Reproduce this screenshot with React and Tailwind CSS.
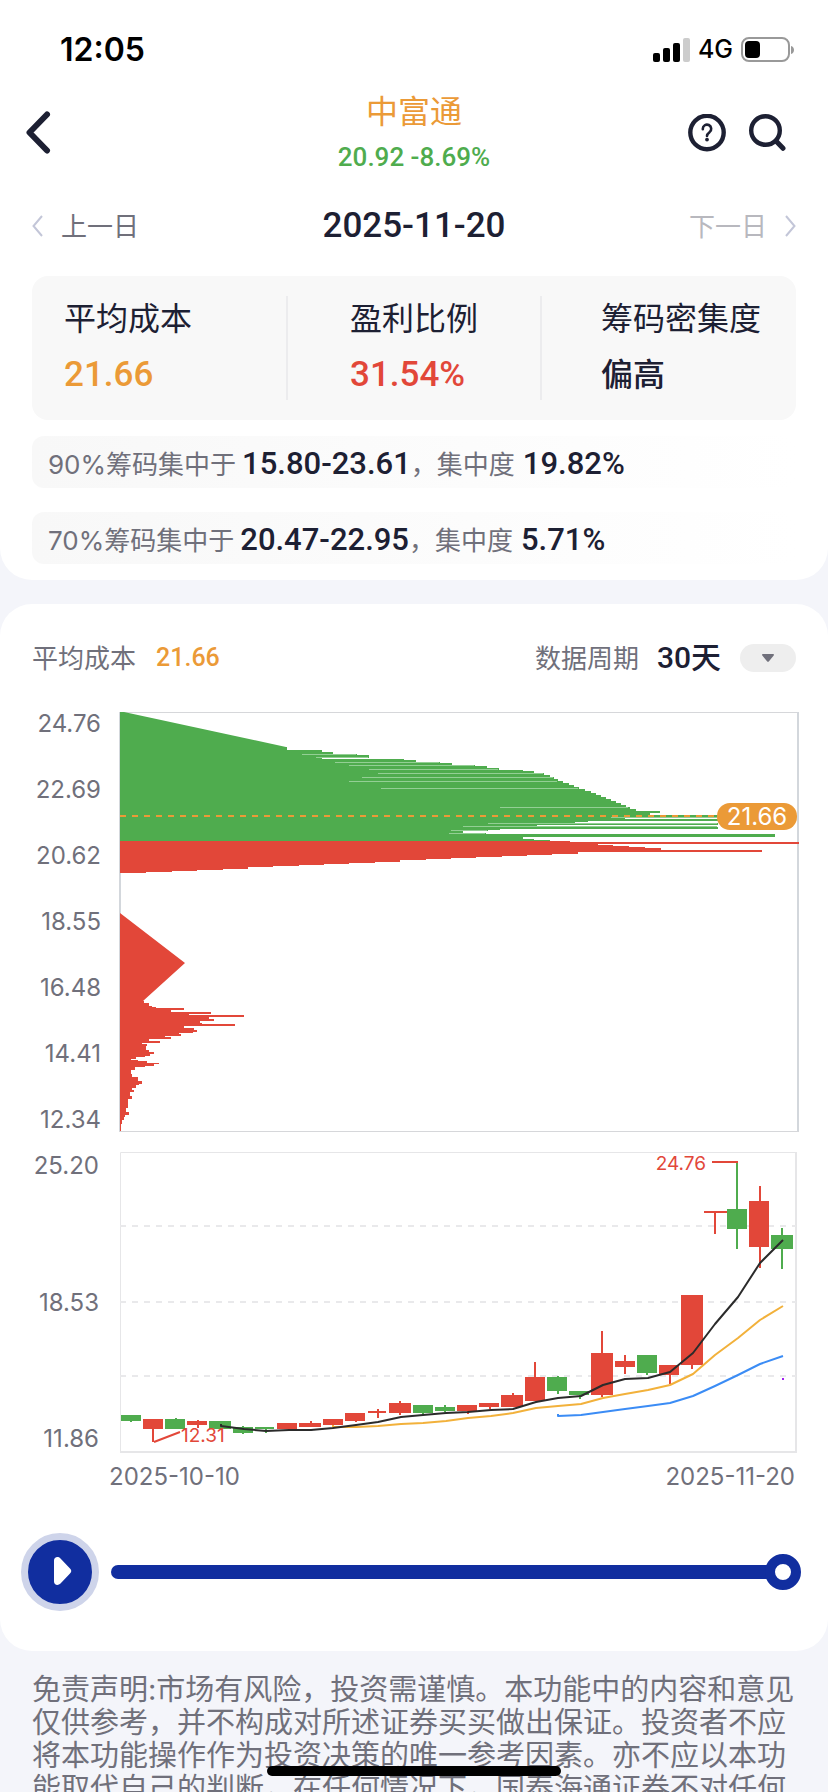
import React, { useState } from "react";

const GREEN = "#4fac4e";
const RED = "#e24739";

const COST_LABELS = ["24.76", "22.69", "20.62", "18.55", "16.48", "14.41", "12.34"];
const PRICE_LABELS = ["25.20", "18.53", "11.86"];

// Chip distribution as horizontal steps: [y, width], each step lasts until the next y.
const LOSS_STEPS = [
  [35, 167], [38, 202], [40, 213], [42, 237], [43, 249], [46, 202], [47, 284], [48, 296],
  [50, 320], [51, 332], [53, 355], [54, 367], [56, 379], [58, 403], [59, 414], [61, 424],
  [63, 430], [65, 434], [67, 438], [69, 443], [71, 449], [73, 454], [75, 459], [77, 465],
  [79, 471], [81, 476], [83, 481], [85, 486], [87, 491], [89, 496], [91, 501], [93, 506],
  [95, 510], [97, 516], [99, 540], [101, 530], [103, 598], [105, 505], [107, 598], [109, 468],
  [110, 455], [111, 598], [113, 417], [115, 598], [117, 380], [118, 368], [119, 343], [121, 366],
  [122, 655], [125, 403], [127, 414], [128, 430], [129, 0],
];
const GAIN_STEPS = [
  [129, 450], [130, 679], [132, 478], [133, 493], [134, 509], [135, 525], [136, 541], [138, 642],
  [140, 458], [142, 432], [143, 407], [144, 382], [145, 356], [146, 331], [147, 306], [148, 280],
  [150, 255], [151, 229], [152, 204], [153, 179], [154, 153], [155, 128], [157, 103], [158, 77],
  [159, 52], [160, 26], [161, 0],
];
const LOW_STEPS = [
  [289, 24], [291, 29], [294, 32], [295, 36], [296, 64], [298, 51], [300, 91], [302, 69],
  [303, 124], [305, 89], [307, 94], [309, 80], [311, 82], [312, 115], [314, 64], [316, 74],
  [318, 77], [320, 73], [321, 59], [322, 61], [324, 45], [325, 51], [327, 29], [329, 40],
  [331, 22], [332, 27], [334, 26], [338, 29], [340, 34], [342, 30], [344, 25], [345, 16],
  [347, 11], [348, 18], [349, 27], [351, 39], [352, 34], [354, 25], [355, 15], [358, 11],
  [362, 12], [365, 18], [369, 22], [372, 19], [373, 16], [376, 12], [378, 14], [380, 10],
  [384, 12], [387, 8], [396, 6], [400, 9], [403, 5], [405, 4], [408, 2], [412, 1], [419, 0],
];
// Hairline gaps between rows: [y, from, to]
const HAIRLINES = [
  [42, 183, 237], [45, 197, 249], [50, 216, 320], [53, 230, 355], [57, 250, 379], [61, 259, 424],
  [65, 243, 434], [69, 230, 438], [76, 262, 459], [95, 381, 509], [105, 492, 598], [111, 369, 598],
  [114, 344, 598], [118, 332, 368], [121, 330, 366],
];

// [x, width, open/close top, bottom, high, low, rising]
const CANDLES = [
  [1, 20, 263, 269, 263, 270, 0], [23, 20, 267, 277, 267, 290, 1], [45, 20, 267, 277, 266, 277, 0],
  [67, 20, 269, 273, 268, 276, 1], [89, 22, 269, 277, 269, 277, 0], [113, 20, 275, 281, 274, 282, 0],
  [135, 19, 275, 277, 275, 281, 0], [157, 20, 271, 277, 271, 277, 1], [179, 22, 271, 275, 269, 275, 1],
  [203, 20, 267, 273, 267, 275, 1], [225, 20, 261, 269, 261, 270, 1], [248, 18, 259, 261, 257, 266, 1],
  [269, 22, 251, 261, 249, 263, 1], [293, 20, 253, 261, 253, 262, 0], [315, 20, 255, 259, 253, 260, 0],
  [337, 20, 253, 259, 253, 262, 1], [359, 20, 251, 255, 251, 257, 1], [381, 22, 243, 255, 241, 255, 1],
  [405, 20, 225, 249, 210, 249, 1], [427, 20, 225, 239, 224, 242, 0], [449, 20, 239, 243, 239, 247, 0],
  [471, 22, 201, 243, 179, 245, 1], [495, 20, 209, 215, 203, 222, 1], [517, 20, 203, 221, 203, 223, 0],
  [539, 20, 213, 223, 213, 232, 1], [561, 22, 143, 213, 143, 217, 1], [584, 23, 59, 61, 59, 82, 1],
  [607, 20, 57, 77, 10, 97, 0], [629, 20, 49, 95, 34, 116, 1], [651, 22, 83, 97, 76, 117, 0],
];

const MA5 =
  "101,272 101,274 124,277 146,279 169,278 191,278 213,276 236,273 258,270 281,265 303,263 326,261 348,260 371,258 393,257 416,250 438,246 461,244 483,233 505,227 528,226 550,220 573,201 595,172 618,145 640,111 663,88";
const MA10 =
  "213,273 213,275 236,275 258,274 281,272 303,271 326,269 348,266 371,264 393,261 416,256 438,254 461,252 483,246 505,242 528,238 550,233 573,222 595,203 618,186 640,168 663,154";
const MA20 =
  "438,262 438,264 461,263 483,260 505,257 528,254 550,251 573,244 595,234 618,223 640,212 663,204";

function stepPath(steps) {
  let d = `M1 ${steps[0][0]}`;
  steps.forEach(([y, w]) => {
    d += `V${y}H${1 + w}`;
  });
  return `${d}H1Z`;
}

function StatusBar() {
  return (
    <div className="flex h-[90px] items-center justify-between pt-[10px] pl-[60px] pr-[33px] text-black">
      <div className="text-[32px] font-semibold">12:05</div>
      <div className="flex items-center gap-2">
        <svg width="37" height="24" viewBox="0 0 37 24">
          <rect x="0" y="15" width="7" height="9" rx="2" />
          <rect x="10" y="10" width="7" height="14" rx="2" />
          <rect x="20" y="5" width="7" height="19" rx="2" />
          <rect x="30" y="0" width="7" height="24" rx="2" fill="#cccccc" />
        </svg>
        <span className="text-[25px] font-medium">4G</span>
        <svg width="54" height="26" viewBox="0 0 54 26">
          <rect x="1" y="1" width="47" height="23" rx="7" fill="none" stroke="#999999" strokeWidth="2" />
          <rect x="4" y="4" width="15" height="17" rx="4" />
          <path d="M50 9c4 1 4 7 0 8z" fill="#999999" />
        </svg>
      </div>
    </div>
  );
}

function NavBar() {
  return (
    <header className="grid grid-cols-[1fr_auto_1fr] items-center pl-[25px] pr-[42px] text-[#1d2033]">
      <button aria-label="返回" className="justify-self-start">
        <svg width="26" height="44" viewBox="0 0 26 44" fill="none" stroke="currentColor" strokeWidth="6" strokeLinecap="round" strokeLinejoin="round">
          <path d="M22 3.500 4.500 21.500l17.500 18" />
        </svg>
      </button>
      <div className="pl-[17px] text-center">
        <h1 className="text-[32px] leading-[44px] text-[#eb9a37]">中富通</h1>
        <div className="mt-1 font-[Roboto] text-[26px] leading-[38px] font-medium text-[#4fac4e]">20.92 -8.69%</div>
      </div>
      <div className="flex items-center gap-[22px] justify-self-end">
        <button aria-label="帮助">
          <svg width="38" height="38" viewBox="0 0 38 38" fill="none" stroke="currentColor" strokeLinecap="round" strokeLinejoin="round">
            <circle cx="19" cy="18.500" r="16.700" strokeWidth="4.400" />
            <path d="M14.800 15.300v-.5a4.200 4.200 0 1 1 6.800 3.300c-1.600 1.200-2.600 1.900-2.600 3.900" strokeWidth="2.600" />
            <circle cx="19" cy="25.600" r="1.900" fill="currentColor" stroke="none" />
          </svg>
        </button>
        <button aria-label="搜索">
          <svg width="38" height="38" viewBox="0 0 38 38" fill="none" stroke="currentColor" strokeLinecap="round">
            <circle cx="17.500" cy="16.500" r="14.300" strokeWidth="4.400" />
            <path d="m28.500 27.500 6.500 6.800" strokeWidth="5" />
          </svg>
        </button>
      </div>
    </header>
  );
}

function DateSwitcher() {
  return (
    <div className="grid h-[100px] grid-cols-[1fr_auto_1fr] items-center px-8">
      <button className="flex items-center gap-[18px] justify-self-start text-[26px] text-[#70707b]">
        <svg width="11" height="22" viewBox="0 0 11 22" fill="none" stroke="#c3c6d8" strokeWidth="2">
          <path d="M10 1 1.500 11 10 21" />
        </svg>
        上一日
      </button>
      <div className="font-[Roboto] text-[35px] font-medium text-[#1d2033]">2025-11-20</div>
      <button className="flex items-center gap-[18px] justify-self-end text-[26px] text-[#b8b8be]">
        下一日
        <svg width="11" height="22" viewBox="0 0 11 22" fill="none" stroke="#c3c6d8" strokeWidth="2">
          <path d="M1 1l8.500 10L1 21" />
        </svg>
      </button>
    </div>
  );
}

function SummaryCard() {
  return (
    <div className="mx-8 grid grid-cols-[256fr_254fr_254fr] rounded-2xl bg-[#f8f8f8] py-5">
      <div className="flex h-[104px] flex-col gap-[10px] border-r-2 border-[#ececee] pl-8">
        <div className="text-[32px] leading-[46px] text-[#1d2033]">平均成本</div>
        <div className="font-[Roboto] text-[35px] leading-[46px] font-medium text-[#eb9a37]">21.66</div>
      </div>
      <div className="flex flex-col gap-[10px] border-r-2 border-[#ececee] pl-[62px]">
        <div className="text-[32px] leading-[46px] text-[#1d2033]">盈利比例</div>
        <div className="font-[Roboto] text-[35px] leading-[46px] font-medium text-[#e24739]">31.54%</div>
      </div>
      <div className="flex flex-col gap-[10px] pl-[59px]">
        <div className="text-[32px] leading-[46px] text-[#1d2033]">筹码密集度</div>
        <div className="text-[32px] leading-[46px] font-medium text-[#1d2033]">偏高</div>
      </div>
    </div>
  );
}

function Concentration({ percent, range, degree }) {
  return (
    <div className="mx-8 flex h-[52px] items-center rounded-xl bg-linear-to-r from-[#f8f8f8] to-white pt-1 pl-4 text-[26px] whitespace-nowrap text-[#70707b]">
      {percent}筹码集中于
      <span className="ml-[6px] font-[Roboto] text-[31px] font-medium text-[#1d2033]">{range}</span>
      ，集中度
      <span className="ml-2 font-[Roboto] text-[31px] font-medium text-[#1d2033]">{degree}</span>
    </div>
  );
}

function CostChart() {
  return (
    <div className="flex pr-[29px]">
      <div className="flex w-[101px] shrink-0 flex-col justify-between text-right text-[24px] leading-6 text-[#70707b]">
        {COST_LABELS.map((l) => (
          <div key={l}>{l}</div>
        ))}
      </div>
      <svg className="ml-[18px] h-auto min-w-0 flex-1" viewBox="0 0 680 420">
        <path d="M0 .5h679" stroke="#d6d7da" />
        <path d="M1 0v420M679 0v420" stroke="#d3d7dc" strokeWidth="2" />
        <path d="M0 419.500h680" stroke="#d6d7da" />
        <path d="M1 0H5L167 35V40H1Z" fill={GREEN} />
        <path d={stepPath(LOSS_STEPS)} fill={GREEN} shapeRendering="crispEdges" />
        {HAIRLINES.map(([y, from, to]) => (
          <rect key={y} x={from} y={y} width={to - from} height="1" fill="#93cf94" />
        ))}
        <path d={stepPath(GAIN_STEPS)} fill={RED} shapeRendering="crispEdges" />
        <path d="M1 201L66 251L24 289V291H1Z" fill={RED} />
        <path d={stepPath(LOW_STEPS)} fill={RED} shapeRendering="crispEdges" />
        <path d="M1 104h597" stroke="#eb9a37" strokeWidth="2" strokeDasharray="6 6" />
        <rect x="598" y="91" width="80" height="27" rx="13" fill="#eb9a37" />
        <text x="638" y="113" textAnchor="middle" fontSize="24" fill="#ffffff">21.66</text>
      </svg>
    </div>
  );
}

function CandleChart() {
  return (
    <div className="mt-5">
      <div className="flex pr-[31px]">
        <div className="flex w-[99px] shrink-0 flex-col justify-between text-right text-[24px] leading-7 text-[#70707b]">
          {PRICE_LABELS.map((l) => (
            <div key={l}>{l}</div>
          ))}
        </div>
        <svg className="ml-[21px] h-auto min-w-0 flex-1" viewBox="0 0 677 301">
          <path d="M.5 300V.5H676" fill="none" stroke="#e6e6e8" />
          <path d="M676 0v300H0" fill="none" stroke="#e6e6e8" strokeWidth="2" />
          <path d="M0 74h676M0 150h676M0 224h676" stroke="#e9e9eb" strokeWidth="2" strokeDasharray="6 6" />
          {CANDLES.map(([x, w, top, bottom, high, low, rising], i) => (
            <g key={x} fill={rising ? RED : GREEN}>
              <rect x={Math.round(10 + i * 22.45)} y={high} width="2" height={low - high} />
              <rect x={x} y={top} width={w} height={bottom - top} />
            </g>
          ))}
          <g fill="none" strokeWidth="2" strokeLinejoin="round">
            <polyline points={MA10} stroke="#f2b13b" />
            <polyline points={MA20} stroke="#3b8cf5" />
            <polyline points={MA5} stroke="#2b2b2b" />
            <path d="M34 290l26-10M592 10h26" stroke={RED} />
          </g>
          <rect x="662" y="226" width="2" height="2" fill="#a020f0" />
          <text x="61" y="290" fontSize="19" fill={RED}>12.31</text>
          <text x="586" y="18" textAnchor="end" fontSize="19" fill={RED}>24.76</text>
        </svg>
      </div>
      <div className="flex justify-between pr-[33px] pl-[109px] text-[24px] leading-[48px] text-[#70707b]">
        <span>2025-10-10</span>
        <span>2025-11-20</span>
      </div>
    </div>
  );
}

function Player() {
  const [day, setDay] = useState(30);
  return (
    <div className="mt-8 flex items-center gap-3 pr-[27px] pl-[21px]">
      <button aria-label="播放" className="flex size-[78px] shrink-0 items-center justify-center rounded-full border-[7px] border-[#ced4ea] bg-[#112e9f]">
        <svg width="64" height="64" viewBox="0 0 64 64" fill="#ffffff">
          <path d="M26 20.500c0-3.500 4-4.500 6.500-2L42 28.500c1.700 1.700 1.700 3.300 0 5l-9.500 10c-2.500 2.500-6.500 1.500-6.500-2z" />
        </svg>
      </button>
      <input
        type="range"
        min="1"
        max="30"
        value={day}
        onChange={(e) => setDay(Number(e.target.value))}
        aria-label="日期进度"
        className="h-9 min-w-0 flex-1 appearance-none bg-transparent [&::-webkit-slider-runnable-track]:h-[14px] [&::-webkit-slider-runnable-track]:rounded-l-full [&::-webkit-slider-runnable-track]:rounded-r-[18px] [&::-webkit-slider-runnable-track]:bg-linear-to-r [&::-webkit-slider-runnable-track]:from-[#112e9f] [&::-webkit-slider-runnable-track]:from-98% [&::-webkit-slider-runnable-track]:to-transparent [&::-webkit-slider-runnable-track]:to-98% [&::-webkit-slider-thumb]:-mt-[11px] [&::-webkit-slider-thumb]:size-9 [&::-webkit-slider-thumb]:appearance-none [&::-webkit-slider-thumb]:rounded-full [&::-webkit-slider-thumb]:border-[10px] [&::-webkit-slider-thumb]:border-[#112e9f] [&::-webkit-slider-thumb]:bg-white"
      />
    </div>
  );
}

export default function App() {
  return (
    <div className="relative h-screen overflow-hidden bg-[#f4f5fa] font-[Inter,'Noto_Sans_CJK_SC',sans-serif]">
      <section className="rounded-b-[32px] bg-white pb-4">
        <StatusBar />
        <NavBar />
        <DateSwitcher />
        <SummaryCard />
        <div className="mt-4 flex flex-col gap-6">
          <Concentration percent="90%" range="15.80-23.61" degree="19.82%" />
          <Concentration percent="70%" range="20.47-22.95" degree="5.71%" />
        </div>
      </section>

      <section className="mt-6 rounded-[32px] bg-white pb-10">
        <div className="flex h-[108px] items-center justify-between px-8 text-[26px] text-[#70707b]">
          <div className="flex items-center gap-5">
            平均成本
            <span className="font-[Roboto] text-[25px] font-medium text-[#eb9a37]">21.66</span>
          </div>
          <div className="flex items-center gap-[18px]">
            <label htmlFor="period">数据周期</label>
            <div className="relative">
              <select id="period" defaultValue="30" className="block w-[139px] appearance-none bg-transparent font-[Roboto,'Noto_Sans_CJK_SC',sans-serif] text-[30px] leading-10 font-medium text-[#1d2033]">
                <option value="30">30天</option>
                <option value="60">60天</option>
                <option value="90">90天</option>
              </select>
              <span className="pointer-events-none absolute top-[6px] right-0 flex h-7 w-14 items-center justify-center rounded-full bg-[#eeeeee]">
                <svg width="14" height="10" viewBox="0 0 14 10" fill="#70707b">
                  <path d="M2 1h10c1 0 1.300.8.700 1.500L8 8.300c-.6.700-1.400.7-2 0L1.300 2.500C.7 1.800 1 1 2 1z" />
                </svg>
              </span>
            </div>
          </div>
        </div>
        <CostChart />
        <CandleChart />
        <Player />
      </section>

      <p className="px-8 pt-[22px] text-[29px] leading-[33px] text-[#70707b]">
        免责声明:市场有风险，投资需谨慎。本功能中的内容和意见仅供参考，并不构成对所述证券买买做出保证。投资者不应将本功能操作作为投资决策的唯一参考因素。亦不应以本功能取代自己的判断，在任何情况下，国泰海通证券不对任何
      </p>

      {/* home indicator */}
      <div className="absolute bottom-4 left-1/2 h-[10px] w-[294px] -translate-x-1/2 rounded-full bg-black" />
    </div>
  );
}
